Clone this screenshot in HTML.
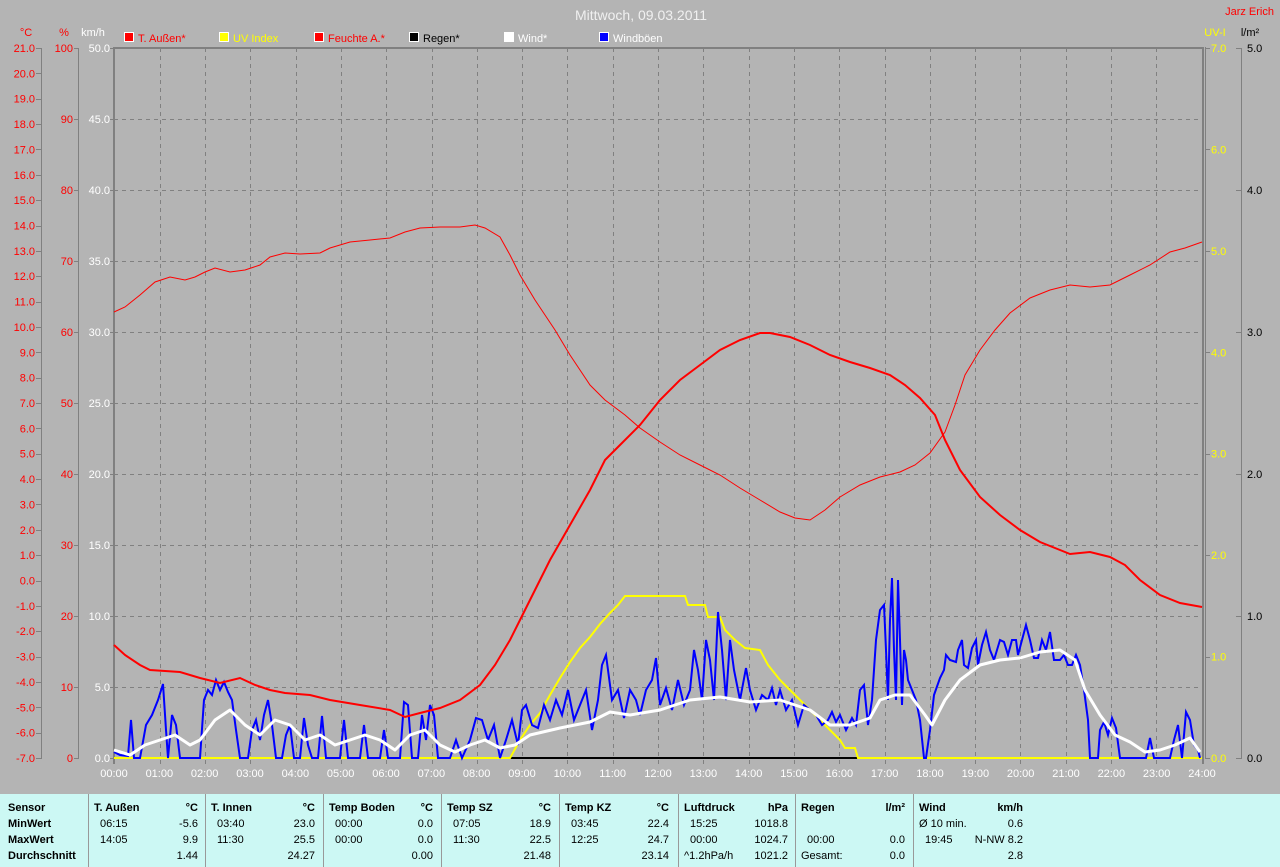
<!DOCTYPE html>
<html><head><meta charset="utf-8"><style>
html,body{margin:0;padding:0;background:#b4b4b4;width:1280px;height:867px;overflow:hidden;font-family:"Liberation Sans",sans-serif}
svg{position:absolute;left:0;top:0}
#tbl{position:absolute;left:0;top:794px;width:1280px;height:73px;background:#ccf8f4;font-size:11px;color:#000}
.c{position:absolute;top:0;height:73px;border-left:1px solid #999}
.r{position:absolute;white-space:nowrap}
.b{font-weight:bold}
</style></head><body>
<svg width="1280" height="794" font-family="Liberation Sans, sans-serif" font-size="11">
<text x="641" y="20" fill="#f0f0f0" font-size="14" text-anchor="middle">Mittwoch, 09.03.2011</text>
<text x="1274" y="15" fill="#ff0000" text-anchor="end">Jarz Erich</text>
<!-- legend -->
<g font-size="11">
<rect x="124.5" y="32.5" width="9" height="9" fill="#ff0000" stroke="#fff"/><text x="138" y="42" fill="#ff0000">T. Außen*</text>
<rect x="219.5" y="32.5" width="9" height="9" fill="#ffff00" stroke="#fff"/><text x="233" y="42" fill="#ffff00">UV Index</text>
<rect x="314.5" y="32.5" width="9" height="9" fill="#ff0000" stroke="#fff"/><text x="328" y="42" fill="#ff0000">Feuchte A.*</text>
<rect x="409.5" y="32.5" width="9" height="9" fill="#000" stroke="#fff"/><text x="423" y="42" fill="#000">Regen*</text>
<rect x="504.5" y="32.5" width="9" height="9" fill="#fff" stroke="#fff"/><text x="518" y="42" fill="#fff">Wind*</text>
<rect x="599.5" y="32.5" width="9" height="9" fill="#0000ff" stroke="#fff"/><text x="613" y="42" fill="#fff">Windböen</text>
</g>
<text x="26" y="36" fill="#ff0000" text-anchor="middle">°C</text>
<text x="64" y="36" fill="#ff0000" text-anchor="middle">%</text>
<text x="93" y="36" fill="#fff" text-anchor="middle">km/h</text>
<text x="1215" y="36" fill="#ffff00" text-anchor="middle">UV-I</text>
<text x="1250" y="36" fill="#000" text-anchor="middle">l/m²</text>
<!-- axis lines -->
<g stroke="#808080" stroke-width="1">
<line x1="41.5" y1="48" x2="41.5" y2="758"/>
<line x1="78.5" y1="48" x2="78.5" y2="758"/>
<line x1="1241.5" y1="48" x2="1241.5" y2="758"/>
</g>
<g id="grid" stroke="#808080" stroke-dasharray="4,4" stroke-width="1">
<line x1="114" x2="1202" y1="119.5" y2="119.5"/><line x1="114" x2="1202" y1="190.5" y2="190.5"/><line x1="114" x2="1202" y1="261.5" y2="261.5"/><line x1="114" x2="1202" y1="332.5" y2="332.5"/><line x1="114" x2="1202" y1="403.5" y2="403.5"/><line x1="114" x2="1202" y1="474.5" y2="474.5"/><line x1="114" x2="1202" y1="545.5" y2="545.5"/><line x1="114" x2="1202" y1="616.5" y2="616.5"/><line x1="114" x2="1202" y1="687.5" y2="687.5"/>
<line y1="48" y2="764" x1="160.5" x2="160.5"/><line y1="48" y2="764" x1="205.5" x2="205.5"/><line y1="48" y2="764" x1="250.5" x2="250.5"/><line y1="48" y2="764" x1="296.5" x2="296.5"/><line y1="48" y2="764" x1="341.5" x2="341.5"/><line y1="48" y2="764" x1="386.5" x2="386.5"/><line y1="48" y2="764" x1="432.5" x2="432.5"/><line y1="48" y2="764" x1="477.5" x2="477.5"/><line y1="48" y2="764" x1="522.5" x2="522.5"/><line y1="48" y2="764" x1="567.5" x2="567.5"/><line y1="48" y2="764" x1="613.5" x2="613.5"/><line y1="48" y2="764" x1="658.5" x2="658.5"/><line y1="48" y2="764" x1="703.5" x2="703.5"/><line y1="48" y2="764" x1="749.5" x2="749.5"/><line y1="48" y2="764" x1="794.5" x2="794.5"/><line y1="48" y2="764" x1="839.5" x2="839.5"/><line y1="48" y2="764" x1="885.5" x2="885.5"/><line y1="48" y2="764" x1="930.5" x2="930.5"/><line y1="48" y2="764" x1="975.5" x2="975.5"/><line y1="48" y2="764" x1="1020.5" x2="1020.5"/><line y1="48" y2="764" x1="1066.5" x2="1066.5"/><line y1="48" y2="764" x1="1111.5" x2="1111.5"/><line y1="48" y2="764" x1="1156.5" x2="1156.5"/>
</g>
<g stroke="#808080">
<line x1="113" y1="48" x2="1204" y2="48" stroke-width="2"/>
<line x1="114" y1="47" x2="114" y2="764" stroke-width="2"/>
<line x1="1203" y1="47" x2="1203" y2="764" stroke-width="2"/>
<line x1="1205.5" y1="47" x2="1205.5" y2="758" stroke-width="1"/>
</g>
<!-- left labels -->
<g id="tempL" fill="#ff0000" text-anchor="end"></g>
<g id="ticks"></g>
<!-- curves -->
<polyline fill="none" stroke="#ff0000" stroke-width="1" points="114,312 125,307 140,295 155,282 170,277 185,280 195,277 205,272 215,268 230,272 245,270 260,265 270,257 285,253 300,254 320,253 330,248 350,242 370,240 390,238 405,232 420,228 440,227 460,227 475,225 485,228 500,237 510,255 520,275 535,300 545,315 555,330 570,355 590,385 605,400 625,415 640,428 660,442 680,455 700,465 720,475 740,488 760,500 780,512 795,518 810,520 825,510 840,497 860,485 880,477 900,472 915,465 930,453 945,432 955,405 965,375 980,350 995,330 1010,313 1030,298 1050,290 1070,285 1090,287 1110,285 1130,275 1150,265 1170,252 1185,248 1202,242"/>
<polyline fill="none" stroke="#000" stroke-width="2" points="510,758 858,758"/>
<polyline fill="none" stroke="#ffff00" stroke-width="2" points="114,758 510,758 520,740 530,725 540,713 550,695 560,678 570,662 580,648 590,637 600,624 610,613 618,605 625,596 685,596 688,605 705,605 708,617 720,617 725,630 735,640 745,648 760,650 768,665 780,680 790,690 800,700 810,710 820,720 830,730 840,740 845,748 855,748 858,758 1202,758"/>
<polyline fill="none" stroke="#0000ff" stroke-width="2" points="114,752 120,755 128,756 131,720 134,758 140,758 146,725 152,715 158,700 163,684 166,730 168,758 172,715 176,725 180,758 200,758 204,700 208,690 212,695 216,680 220,690 224,682 228,692 232,700 236,730 240,758 248,758 252,730 256,720 260,740 264,715 268,700 272,725 276,758 282,758 286,735 290,725 294,758 300,758 304,718 308,745 312,758 318,758 322,716 326,758 340,758 344,720 348,758 360,758 364,725 368,758 380,758 384,730 388,758 400,758 404,702 408,705 412,758 418,758 422,715 426,740 430,705 434,715 438,758 450,758 456,740 462,758 470,740 476,718 482,720 488,740 494,725 500,758 506,740 512,720 518,745 522,710 526,705 532,725 538,728 544,705 550,720 556,700 562,715 568,690 574,720 580,705 586,690 592,730 598,700 602,665 606,655 612,700 618,690 624,718 630,690 636,700 640,715 646,690 652,680 656,658 660,705 666,688 672,710 678,680 684,705 690,690 694,650 698,670 702,700 706,640 710,660 714,700 718,612 722,650 726,700 730,640 734,670 740,700 746,668 750,690 756,710 762,695 768,700 772,688 776,705 780,690 786,710 792,700 798,725 804,705 810,710 816,715 822,725 828,720 832,712 836,722 840,715 846,730 852,718 856,725 860,690 864,685 868,725 872,700 876,640 880,610 884,605 886,650 888,700 890,620 892,578 894,650 896,700 898,580 900,640 902,705 904,650 906,660 908,680 912,690 916,700 920,720 924,758 926,758 930,730 934,695 940,678 944,670 946,655 950,660 956,662 958,650 962,640 964,665 968,668 972,648 976,640 978,665 982,645 986,632 990,650 994,660 1000,640 1004,642 1008,655 1012,640 1016,640 1018,655 1022,640 1026,625 1030,640 1034,658 1038,658 1042,640 1046,650 1050,632 1054,660 1060,660 1064,655 1068,665 1072,665 1076,655 1080,665 1084,690 1088,720 1090,758 1098,758 1100,730 1104,722 1108,735 1112,718 1116,728 1120,758 1146,758 1150,738 1154,758 1170,758 1174,740 1178,725 1182,758 1186,712 1190,720 1194,745 1198,750 1200,758"/>
<polyline fill="none" stroke="#fff" stroke-width="3" stroke-linejoin="round" points="114,750 130,755 145,745 160,740 175,735 190,745 200,740 215,720 230,710 245,725 260,735 275,720 290,725 305,740 320,735 335,745 350,740 365,735 380,740 395,750 410,735 425,730 440,745 455,752 470,745 485,740 500,748 515,745 530,735 560,728 590,722 610,712 630,715 660,710 690,700 720,697 750,702 780,700 810,710 830,725 850,725 870,718 880,700 895,695 910,695 925,715 932,725 945,700 960,680 980,665 1000,660 1020,658 1040,652 1060,650 1075,660 1085,690 1100,715 1115,735 1130,742 1145,752 1160,750 1175,745 1190,738 1200,752"/>
<polyline fill="none" stroke="#ff0000" stroke-width="2" points="114,645 125,655 140,665 150,670 180,672 200,678 220,683 240,678 255,685 270,690 285,693 310,695 330,700 360,705 390,710 405,717 420,713 440,708 460,700 480,685 495,665 510,640 520,620 535,590 550,560 570,525 590,490 605,460 620,445 640,425 660,400 680,380 700,365 720,350 740,340 760,333 770,333 790,337 810,345 830,355 850,362 870,368 890,375 905,385 920,398 935,415 945,440 960,470 980,497 1000,515 1020,530 1040,542 1060,550 1070,554 1090,552 1110,557 1125,565 1140,580 1160,595 1180,603 1202,607"/>
<g id="xl" fill="#fff" text-anchor="middle"></g>
</svg>
<div id="tbl">
<div class="c" style="left:88px"></div><div class="c" style="left:205px"></div><div class="c" style="left:323px"></div><div class="c" style="left:441px"></div><div class="c" style="left:559px"></div><div class="c" style="left:678px"></div><div class="c" style="left:795px"></div><div class="c" style="left:913px"></div>
<div class="r b" style="left:8px;top:8px">Sensor</div><div class="r b" style="left:8px;top:24px">MinWert</div><div class="r b" style="left:8px;top:40px">MaxWert</div><div class="r b" style="left:8px;top:56px">Durchschnitt</div>
</div>
<script>
(function(){
var ns="http://www.w3.org/2000/svg";
function t(g,x,y,s,fill,anchor){var e=document.createElementNS(ns,"text");e.setAttribute("x",x);e.setAttribute("y",y);e.textContent=s;if(fill)e.setAttribute("fill",fill);if(anchor)e.setAttribute("text-anchor",anchor);g.appendChild(e);}
function l(g,x1,y1,x2,y2){var e=document.createElementNS(ns,"line");e.setAttribute("x1",x1);e.setAttribute("y1",y1);e.setAttribute("x2",x2);e.setAttribute("y2",y2);e.setAttribute("stroke","#808080");g.appendChild(e);}
var g=document.getElementById("tempL"),tk=document.getElementById("ticks");
for(var i=0;i<=28;i++){var y=48+i*710/28;var v=(21-i).toFixed(1);t(g,35,y+4,v);l(tk,36,Math.round(y)+0.5,42,Math.round(y)+0.5);}
for(var i=0;i<=10;i++){var y=48+i*71;t(tk,73,y+4,String(100-i*10),"#ff0000","end");l(tk,74,y+0.5,79,y+0.5);t(tk,110,y+4,(50-i*5).toFixed(1),"#fff","end");l(tk,110,y+0.5,114,y+0.5);}
for(var i=0;i<=7;i++){var y=48+i*710/7;t(tk,1211,y+4,(7-i).toFixed(1),"#ffff00");l(tk,1205,Math.round(y)+0.5,1210,Math.round(y)+0.5);}
for(var i=0;i<=5;i++){var y=48+i*142;t(tk,1247,y+4,(5-i).toFixed(1),"#000");l(tk,1236,y+0.5,1242,y+0.5);}
var xl=document.getElementById("xl");
for(var h=0;h<=24;h++){var x=114+h*1088/24;t(xl,x,777,(h<10?"0":"")+h+":00");}
var tb=document.getElementById("tbl");
function d(x,y,s,b,right){var e=document.createElement("div");e.className="r"+(b?" b":"");e.style.top=y+"px";if(right){e.style.right=(1280-x)+"px";}else e.style.left=x+"px";e.textContent=s;tb.appendChild(e);}
var cols=[[88,"T. Außen","°C",["06:15","-5.6"],["14:05","9.9"],["","1.44"]],
[205,"T. Innen","°C",["03:40","23.0"],["11:30","25.5"],["","24.27"]],
[323,"Temp Boden","°C",["00:00","0.0"],["00:00","0.0"],["","0.00"]],
[441,"Temp SZ","°C",["07:05","18.9"],["11:30","22.5"],["","21.48"]],
[559,"Temp KZ","°C",["03:45","22.4"],["12:25","24.7"],["","23.14"]],
[678,"Luftdruck","hPa",["15:25","1018.8"],["00:00","1024.7"],["^1.2hPa/h","1021.2"]],
[795,"Regen","l/m²",["",""],["00:00","0.0"],["Gesamt:","0.0"]],
[913,"Wind","km/h",["Ø 10 min.","0.6"],["19:45","N-NW 8.2"],["","2.8"]]];
cols.forEach(function(c){var x=c[0],r=x+110;d(x+6,8,c[1],1);d(r,8,c[2],1,1);
[c[3],c[4],c[5]].forEach(function(p,i){var y=24+i*16;var lx=(p[0].charAt(0)>="0"&&p[0].charAt(0)<="9")?x+12:x+6;if(p[0])d(lx,y,p[0]);if(p[1])d(r,y,p[1],0,1);});});
})();
</script>
</body></html>
